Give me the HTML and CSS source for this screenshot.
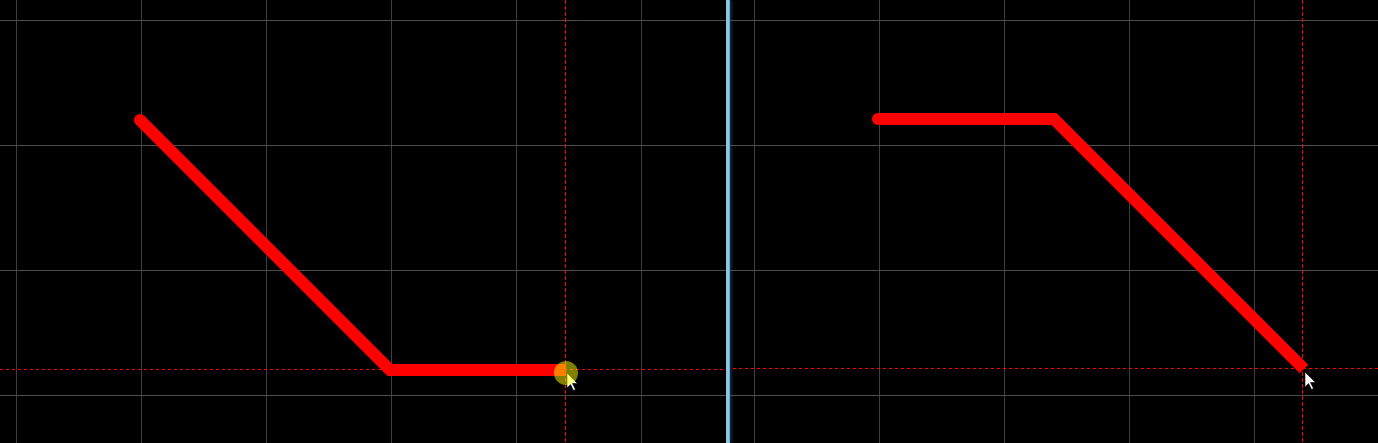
FILE: index.html
```html
<!DOCTYPE html>
<html lang="en">
<head>
<meta charset="utf-8">
<title>Trace routing</title>
<link rel="stylesheet" href="styles.css">
</head>
<body>
<div class="app">
  <div class="pane pane-left">
    <svg class="canvas" viewBox="0 0 726 443" width="726" height="443">
      <g class="grid-v">
        <line x1="16.5" y1="0" x2="16.5" y2="443"/>
        <line x1="141.5" y1="0" x2="141.5" y2="443"/>
        <line x1="266.5" y1="0" x2="266.5" y2="443"/>
        <line x1="391.5" y1="0" x2="391.5" y2="443"/>
        <line x1="516.5" y1="0" x2="516.5" y2="443"/>
        <line x1="641.5" y1="0" x2="641.5" y2="443"/>
      </g>
      <g class="grid-h">
        <line x1="0" y1="20.5" x2="726" y2="20.5"/>
        <line x1="0" y1="145.5" x2="726" y2="145.5"/>
        <line x1="0" y1="270.5" x2="726" y2="270.5"/>
        <line x1="0" y1="395.5" x2="726" y2="395.5"/>
      </g>
      <line class="cross-h" x1="0" y1="369.5" x2="726" y2="369.5"/>
      <line class="cross-v" x1="565.5" y1="0" x2="565.5" y2="443"/>
      <circle class="trace-cap" cx="140" cy="120" r="6"/>
      <path class="trace" d="M140 120 L390 370 L566 370"/>
      <path class="cursor" d="M567 373 L567 388 L570.5 384.5 L573.5 390.5 L575.5 389.5 L572.5 383.5 L577.5 383.5 Z"/>
      <circle class="snap" cx="566" cy="373" r="12"/>
    </svg>
  </div>
  <div class="divider"></div>
  <div class="pane pane-right">
    <svg class="canvas" viewBox="0 0 648 443" width="648" height="443">
      <g class="grid-v">
        <line x1="24.5" y1="0" x2="24.5" y2="443"/>
        <line x1="149.5" y1="0" x2="149.5" y2="443"/>
        <line x1="274.5" y1="0" x2="274.5" y2="443"/>
        <line x1="399.5" y1="0" x2="399.5" y2="443"/>
        <line x1="524.5" y1="0" x2="524.5" y2="443"/>
      </g>
      <g class="grid-h">
        <line x1="0" y1="20.5" x2="648" y2="20.5"/>
        <line x1="0" y1="145.5" x2="648" y2="145.5"/>
        <line x1="0" y1="270.5" x2="648" y2="270.5"/>
        <line x1="0" y1="395.5" x2="648" y2="395.5"/>
      </g>
      <line class="cross-h" x1="3" y1="368.5" x2="648" y2="368.5"/>
      <line class="cross-v" x1="572.5" y1="0" x2="572.5" y2="443"/>
      <circle class="trace-cap" cx="148" cy="119" r="6"/>
      <path class="trace" d="M148 119 L324 119 L574 369"/>
      <path class="cursor" d="M575 372 L575 387 L578.5 383.5 L581.5 389.5 L583.5 388.5 L580.5 382.5 L585.5 382.5 Z"/>
    </svg>
  </div>
</div>
</body>
</html>
```
FILE: styles.css
```css
html, body {
  margin: 0;
  padding: 0;
  background: #000;
  overflow: hidden;
}

.app {
  display: flex;
  width: 1378px;
  height: 443px;
}

.pane {
  height: 443px;
  background: #000;
  overflow: hidden;
}

.pane-left {
  width: 726px;
  flex: 0 0 726px;
}

.pane-right {
  flex: 1 1 auto;
}

.divider {
  width: 4px;
  flex: 0 0 4px;
  background: linear-gradient(to right, #8cc2e2 0%, #92c8e6 60%, #6c9cbc 100%);
  box-shadow: 2px 0 3px rgba(30, 80, 110, 0.55);
  position: relative;
  z-index: 1;
}

.canvas {
  display: block;
}

.grid-v line {
  stroke: #3e3e3e;
  stroke-width: 1;
  shape-rendering: crispEdges;
}

.grid-h line {
  stroke: #4c4c4c;
  stroke-width: 1;
  shape-rendering: crispEdges;
}

.cross-h {
  stroke: #ff0000;
  stroke-width: 1;
  stroke-dasharray: 3 3;
  shape-rendering: crispEdges;
}

.cross-v {
  stroke: #ff0000;
  stroke-width: 1;
  stroke-dasharray: 4 2;
  shape-rendering: crispEdges;
}

.trace {
  fill: none;
  stroke: #ff0000;
  stroke-width: 12;
  stroke-linecap: butt;
  stroke-linejoin: miter;
}

.trace-cap {
  fill: #ff0000;
}

.cursor {
  fill: #ffffff;
  stroke: #000;
  stroke-width: 0.6;
}

.snap {
  fill: rgba(255, 255, 0, 0.5);
}
```
